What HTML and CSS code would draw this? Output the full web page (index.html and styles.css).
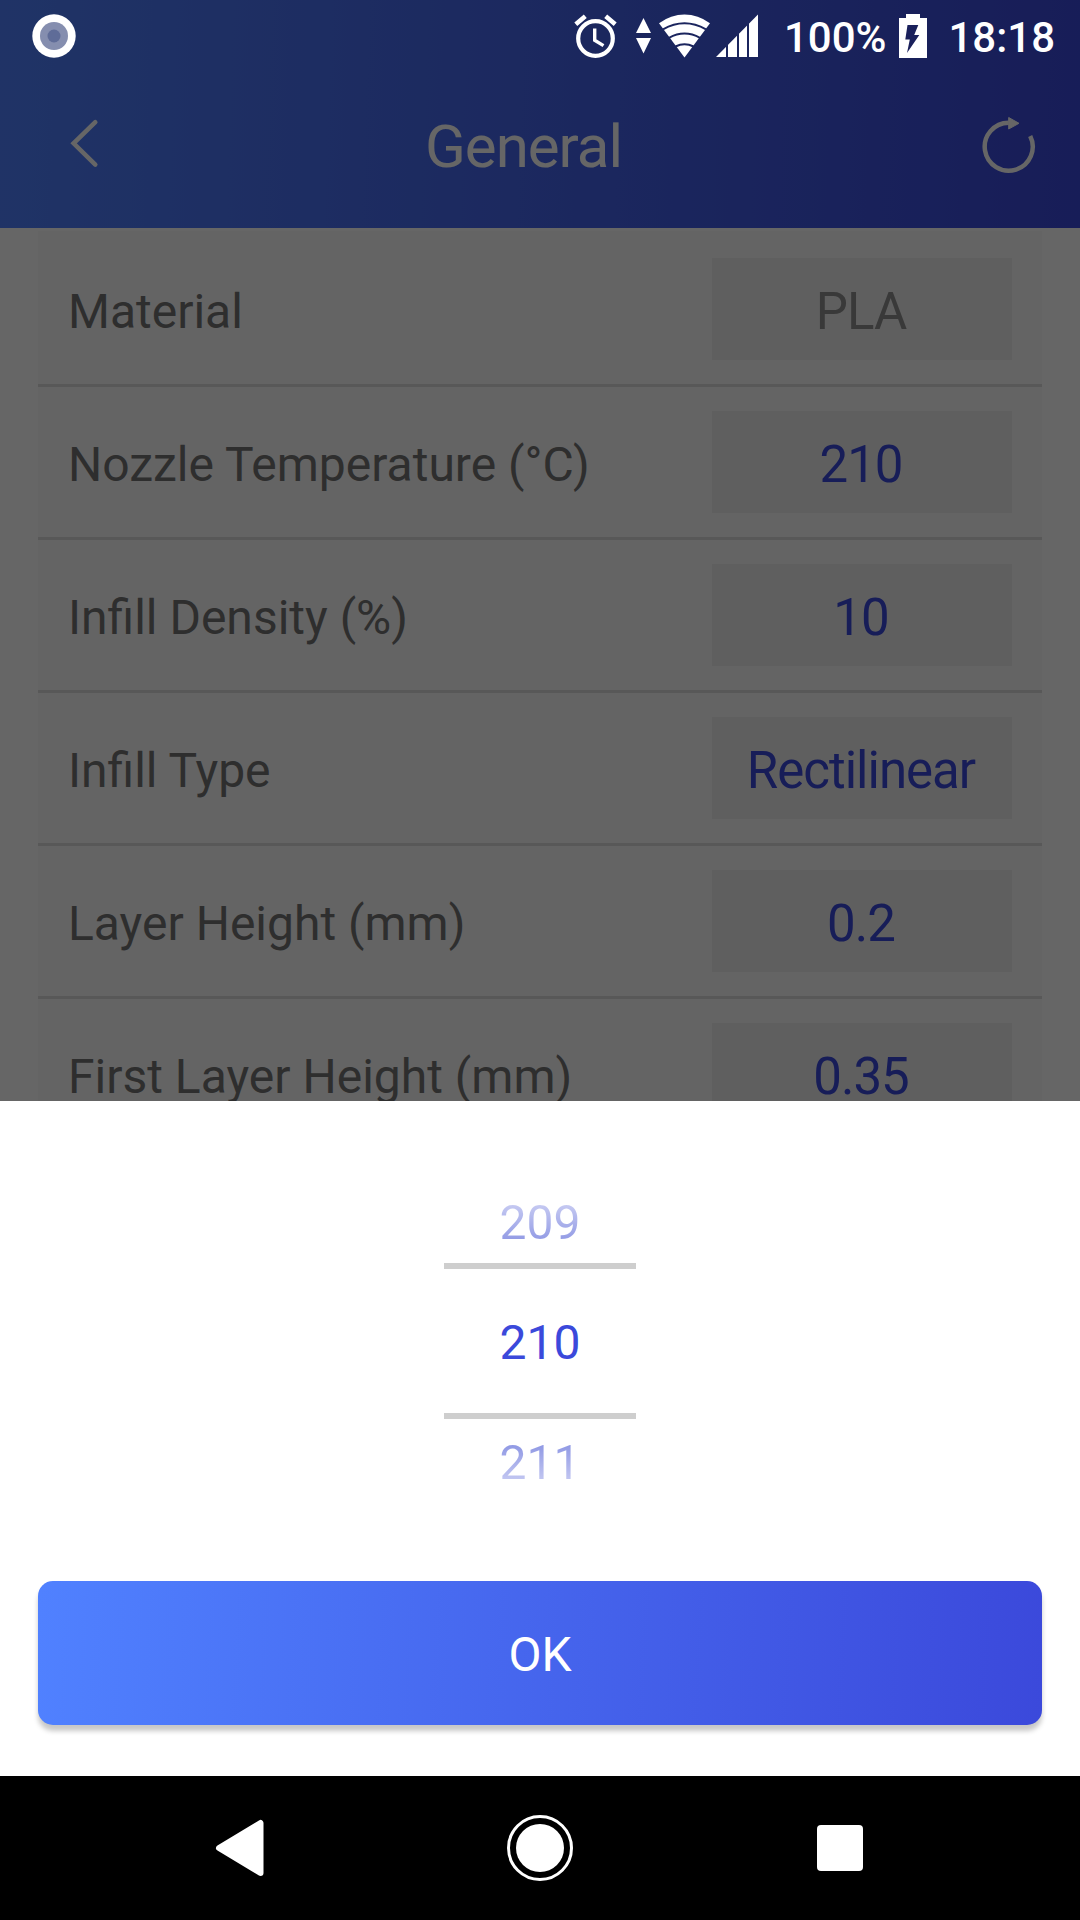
FILE: index.html
```html
<!DOCTYPE html>
<html lang="en">
<head>
    <meta charset="UTF-8">
    <title>General</title>
    <link rel="stylesheet" href="styles.css">
</head>
<body>
<div class="screen">
    <!-- Header -->
    <header class="header">
        <div class="toolbar">
            <svg class="btn-back" viewBox="70 118 30 50"><path d="M95.3 122.2 73.6 143.3 95.3 164.6"/></svg>
            <h1>General</h1>
            <svg class="btn-reset" viewBox="980 114 56 62">
                <path class="ring" d="M1030.2 136A24 24 0 1 1 1008.7 122.7"/>
                <path class="tip" d="M1008.7 117.5 1019 123.3 1008.7 129Z"/>
            </svg>
        </div>
    </header>

    <!-- Settings list -->
    <main class="settings">
        <div class="row"><span class="label">Material</span><span class="value disabled">PLA</span></div>
        <div class="row"><span class="label">Nozzle Temperature (°C)</span><span class="value">210</span></div>
        <div class="row"><span class="label">Infill Density (%)</span><span class="value">10</span></div>
        <div class="row"><span class="label">Infill Type</span><span class="value">Rectilinear</span></div>
        <div class="row"><span class="label">Layer Height (mm)</span><span class="value">0.2</span></div>
        <div class="row"><span class="label">First Layer Height (mm)</span><span class="value">0.35</span></div>
    </main>

    <div class="overlay"></div>

    <!-- Status bar -->
    <div class="status-bar">
        <svg class="icon-record" viewBox="0 0 44 44">
            <circle cx="22" cy="22" r="21.7" fill="#fff"/>
            <circle cx="22" cy="22" r="14" fill="#858eaf"/>
            <circle cx="22" cy="22" r="6.5" fill="#5f6c98"/>
        </svg>
        <svg class="icon-alarm" viewBox="574 14 43 44">
            <circle cx="595.5" cy="38.5" r="17.3" fill="none" stroke="#fff" stroke-width="4.2"/>
            <path d="M594.7 28.5V40.3L603.5 45.6" fill="none" stroke="#fff" stroke-width="3.4"/>
            <path d="M575.8 24.2 585.3 16.3M615.2 24.2 605.7 16.3" stroke="#fff" stroke-width="4.6"/>
        </svg>
        <svg class="icon-data" viewBox="636 18 15 36"><path d="M636 33 643.5 18 651 33ZM636 38H651L643.5 53.5Z" fill="#fff"/></svg>
        <svg class="icon-wifi" viewBox="659 14 51 44">
            <path d="M684.5 57.5 659 23.2Q671 14.5 684.5 14.5T710 23.2Z" fill="#fff"/>
            <path d="M663 29.3Q684.5 17.3 706 29.3M669 37.8Q684.5 29.2 700 37.8M675.5 46.5Q684.5 42 693.5 46.5" fill="none" stroke="#1b255e" stroke-width="2"/>
        </svg>
        <svg class="icon-signal" viewBox="716 14 42 44">
            <path d="M716 57 758 14.5V57Z" fill="#fff"/>
            <path d="M727 40V58M738 30V58M748 20V58" stroke="#1b255e" stroke-width="2"/>
        </svg>
        <span class="battery-level">100%</span>
        <svg class="icon-battery" viewBox="899 14 28 44">
            <path d="M906 14H920V18H927V58H899V18H906Z" fill="#fff"/>
            <path d="M907.5 25H918.3L914.2 35H919.3L907 53L909.8 39.5H905.3Z" fill="#1a205b"/>
        </svg>
        <span class="clock">18:18</span>
    </div>

    <!-- Temperature picker -->
    <section class="sheet">
        <div class="picker">
            <div class="option prev">209</div>
            <div class="option selected">210</div>
            <div class="option next">211</div>
            <div class="picker-frame"></div>
        </div>
        <button class="btn-ok">OK</button>
    </section>

    <!-- Navigation bar -->
    <nav class="nav-bar">
        <svg viewBox="0 0 66 66"><path d="M53.5 8V58L12 33Z" fill="#fff" stroke="#fff" stroke-width="6" stroke-linejoin="round"/></svg>
        <svg viewBox="0 0 66 66">
            <circle cx="33" cy="33" r="31.5" fill="none" stroke="#fff" stroke-width="3"/>
            <circle cx="33" cy="33" r="24" fill="#fff"/>
        </svg>
        <svg viewBox="0 0 66 66"><rect x="10" y="10" width="46" height="46" rx="4" fill="#fff"/></svg>
    </nav>
</div>
</body>
</html>
```
FILE: styles.css
```css
/* General */
body {
    margin: 0;
    font-family: Roboto, sans-serif;
    background-color: #000;
}

.screen {
    position: relative;
    display: flex;
    flex-direction: column;
    width: 1080px;
    height: 1920px;
    overflow: hidden;
    background-color: #fff;
}

/* Header */
.header {
    box-sizing: border-box;
    flex: none;
    height: 228px;
    padding-top: 72px;
    background-image: linear-gradient(92deg, #5081ff, #3b49db);
}

.toolbar {
    display: flex;
    align-items: center;
    height: 146px;
    padding: 0 44px 0 70px;
}

.toolbar h1 {
    flex: 1;
    margin: 3px 33px 0 0;
    color: #fff;
    font-size: 60px;
    font-weight: 400;
    letter-spacing: -1px;
    line-height: 70px;
    text-align: center;
}

.btn-back {
    width: 30px;
    height: 50px;
    margin-top: -4px;
    fill: none;
    stroke: #fff;
    stroke-width: 4.5;
    stroke-linecap: round;
}

.btn-reset {
    width: 56px;
    height: 62px;
}

.btn-reset .ring {
    fill: none;
    stroke: #fff;
    stroke-width: 4.5;
}

.btn-reset .tip {
    fill: #fff;
    stroke: #fff;
    stroke-width: 1;
}

/* Settings list */
.settings {
    flex: 1;
    min-height: 0;
    margin: 3px 38px 0;
    padding-top: 3px;
    overflow: hidden;
    background-color: #fafafa;
}

.row {
    display: flex;
    align-items: center;
    justify-content: space-between;
    height: 150px;
    padding: 0 30px;
    border-bottom: 3px solid #dcdcdc;
}

.label {
    padding-top: 4px;
    color: #737373;
    font-size: 48px;
}

.value {
    width: 298px;
    padding: 5px 2px 0 0;
    color: #3b49db;
    background-color: #ededed;
    font-size: 51px;
    letter-spacing: -1px;
    line-height: 97px;
    text-align: center;
}

.value.disabled {
    color: #8f8f8f;
}

.overlay {
    position: absolute;
    inset: 0;
    background-color: rgba(0, 0, 0, 0.6);
}

/* Status bar */
.status-bar {
    position: absolute;
    top: 0;
    left: 0;
    display: flex;
    align-items: center;
    box-sizing: border-box;
    width: 100%;
    height: 72px;
    padding: 0 25px 0 32px;
    color: #fff;
    font-size: 42px;
    font-weight: 500;
}

.battery-level,
.clock {
    padding-top: 2px;
}

.icon-record {
    width: 44px;
    height: 44px;
    margin-right: auto;
}

.icon-alarm {
    width: 43px;
    height: 44px;
    margin-right: 19px;
}

.icon-data {
    width: 15px;
    height: 36px;
    margin-right: 8px;
}

.icon-wifi {
    width: 51px;
    height: 44px;
    margin-right: 6px;
}

.icon-signal {
    width: 42px;
    height: 44px;
    margin-right: 26px;
}

.icon-battery {
    width: 28px;
    height: 44px;
    margin: 0 21px 0 13px;
}

/* Temperature picker */
.sheet {
    position: relative;
    display: flex;
    flex: none;
    flex-direction: column;
    align-items: center;
    box-sizing: border-box;
    height: 675px;
    padding: 60px 38px 0;
    background-color: #fff;
}

.picker {
    position: relative;
    width: 192px;
    margin-bottom: 60px;
}

.option {
    height: 120px;
    color: #3b49db;
    font-size: 48px;
    line-height: 124px;
    text-align: center;
}

.option.prev,
.option.next {
    color: transparent;
    background-clip: text;
    -webkit-background-clip: text;
}

.option.prev {
    background-image: linear-gradient(#fff 0%, #c6caf2 36%, #8f98e4 68%, #7f89e5 100%);
}

.option.next {
    background-image: linear-gradient(#7f89e5 0%, #8f98e4 36%, #c6caf2 68%, #fff 100%);
}

.picker-frame {
    position: absolute;
    top: 102px;
    left: 0;
    box-sizing: border-box;
    width: 192px;
    height: 156px;
    border: solid #cecece;
    border-width: 6px 0;
}

.btn-ok {
    width: 1004px;
    height: 144px;
    padding: 2px 0 0;
    border: none;
    border-radius: 15px;
    color: #fff;
    background-image: linear-gradient(93deg, #5081ff, #3b49db);
    box-shadow: 0 6px 5px rgba(0, 0, 0, 0.22);
    font-family: inherit;
    font-size: 48px;
}

/* Navigation bar */
.nav-bar {
    position: relative;
    display: flex;
    flex: none;
    align-items: center;
    justify-content: center;
    gap: 234px;
    height: 144px;
    background-color: #000;
}

.nav-bar svg {
    width: 66px;
    height: 66px;
}
```
